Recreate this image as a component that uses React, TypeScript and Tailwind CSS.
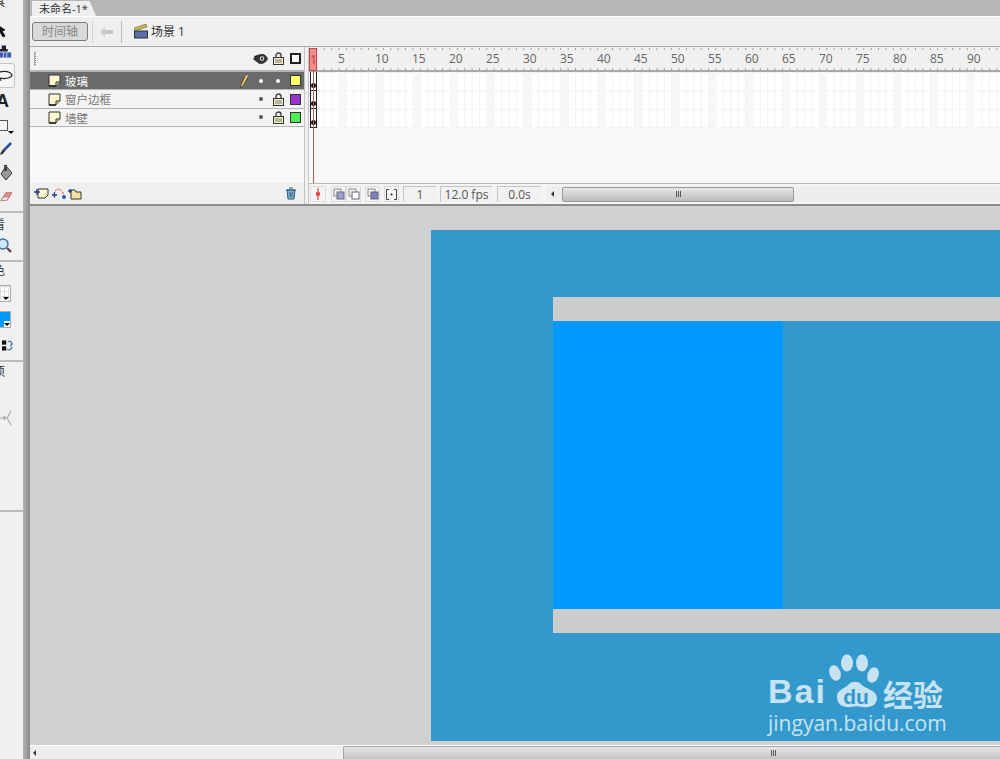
import React from 'react'

const cjk = "font-['Open_Sans','Noto_Sans_CJK_SC',sans-serif]"
const labels = [5, 10, 15, 20, 25, 30, 35, 40, 45, 50, 55, 60, 65, 70, 75, 80, 85, 90]

const PageIcon = () => (
  <svg width="13" height="13" viewBox="0 0 13 13">
    <path d="M1 1h11v7l-4 4H1z" fill="#fbf6cf" stroke="#333" strokeWidth="1" />
    <path d="M12 8H8v4" fill="#d8d0a0" stroke="#333" strokeWidth="1" />
    <path d="M1 12h7" stroke="#222" strokeWidth="1.5" />
  </svg>
)

const Lock = () => (
  <svg width="11" height="13" viewBox="0 0 11 13">
    <path d="M3 6V3.500a2.500 2.500 0 0 1 5 0V6" fill="none" stroke="#444" strokeWidth="1.4" />
    <rect x="0.5" y="5.5" width="10" height="7" fill="#f6f0c8" stroke="#333" />
    <path d="M2 8h7M2 10h7" stroke="#777" strokeWidth="1" />
  </svg>
)

const Eye = () => (
  <svg width="15" height="10" viewBox="0 0 15 10">
    <path d="M0 5C3 1 6 0 9 0c3 0 5 2 6 5-1 2-4 5-7 5C5 10 3 7 0 5z" fill="#333" />
    <path d="M1 2 6 1 2 4z" fill="#222" />
    <circle cx="9" cy="4.500" r="2.200" fill="#eee" />
    <circle cx="9" cy="4.500" r="1.200" fill="#222" />
  </svg>
)

const Pencil = () => (
  <svg width="9" height="14" viewBox="0 0 9 14">
    <path d="M6 .5 8.500 2 3 12 .5 13.500 1 10.500z" fill="#f2cf66" stroke="#333" strokeWidth=".8" />
    <path d="M6 .5 8.500 2 7.600 3.600 5.100 2.200z" fill="#e9a0a0" />
  </svg>
)

const Dot = ({ light }: { light?: boolean }) => (
  <span className={`block w-[4px] h-[4px] rounded-full ${light ? 'bg-white' : 'bg-[#555]'}`} />
)

const LayerRow = ({ name, color, active }: { name: string; color: string; active?: boolean }) => (
  <div className={`h-[18.4px] flex items-center pl-[18px] pr-[3px] border-b border-[#b4b4b4] ${active ? 'bg-[#6a6a6a]' : 'bg-[#f3f3f3]'}`}>
    <PageIcon />
    <span className={`ml-[4px] pt-[2px] text-[11.5px] leading-none ${cjk} ${active ? 'text-white' : 'text-[#777]'}`}>{name}</span>
    <div className="ml-auto flex items-center">
      <div className="w-[16px] flex justify-center">{active && <Pencil />}</div>
      <div className="w-[17px] flex justify-center"><Dot light={active} /></div>
      <div className="w-[18px] flex justify-center">{active ? <Dot light /> : <Lock />}</div>
      <div className="w-[3px]" />
      <span className={`block w-[11px] h-[11px] border border-[#333] ${color}`} />
    </div>
  </div>
)

const OnionIcon = ({ fill }: { fill: string }) => (
  <svg width="12" height="12" viewBox="0 0 12 12">
    <rect x="1" y="1" width="7" height="7" fill="none" stroke="#888" />
    <rect x="4" y="4" width="7" height="7" fill={fill} stroke="#667" />
  </svg>
)

const BarButton = ({ children, className = 'w-[15px]' }: { children: React.ReactNode; className?: string }) => (
  <div className={`h-[16px] flex items-center justify-center bg-[#f4f4f4] border border-[#dcdcdc] ${className}`}>{children}</div>
)

const Field = ({ children, className = '' }: { children: React.ReactNode; className?: string }) => (
  <div className={`h-[16px] flex items-center justify-center bg-[#f1f1f1] border-t border-l border-[#c4c4c4] text-[12px] text-[#555] font-['Open_Sans',sans-serif] ${className}`}>{children}</div>
)

const Grip = () => (
  <span className="flex gap-[1px]">
    <span className="w-[1px] h-[6px] bg-[#555]" />
    <span className="w-[1px] h-[6px] bg-[#555]" />
    <span className="w-[1px] h-[6px] bg-[#555]" />
  </span>
)

const ToolRule = ({ className = '' }: { className?: string }) => <div className={`h-[2px] w-full bg-[#bdbdbd] ${className}`} />

const ToolLabel = ({ text, className = '' }: { text: string; className?: string }) => (
  <div className={`-ml-[7px] text-[12px] leading-none text-[#333] ${cjk} ${className}`}>{text}</div>
)

const Toolbar = () => (
  <aside className="w-[23px] shrink-0 h-full bg-[#f0f0f0] overflow-hidden flex flex-col">
    <ToolLabel text="具" className="-mt-[4px] h-[22px]" />
    <div className="h-[23px] flex items-center">
      <svg className="-ml-[4px]" width="12" height="16" viewBox="0 0 12 16"><path d="M0 2l9 6-3 1 3 5-2 1-3-5-4 3z" fill="#111" stroke="#222" /></svg>
    </div>
    <div className="h-[22px] flex items-center">
      <svg width="12" height="14" viewBox="0 0 14 15"><path d="M2 0v4H0v3h9V4H7V0z" fill="#223" /><rect x="0" y="8" width="13" height="6" fill="#3b5bb5" /><path d="M4 8v6M8 8v6" stroke="#dde" /></svg>
    </div>
    <div className="h-[25px] w-[15px] flex items-center border border-l-0 border-[#c6c6c6] rounded-r-[3px] bg-[#f6f6f6]">
      <svg width="14" height="12" viewBox="0 0 14 12"><ellipse cx="4" cy="5" rx="8" ry="3.600" fill="none" stroke="#222" strokeWidth="1.2" /><path d="M0 8 1 11" stroke="#222" /></svg>
    </div>
    <div className="h-[25px] flex items-center">
      <span className="-ml-[4px] text-[18px] font-bold leading-none text-[#222] font-['Liberation_Sans',sans-serif]">A</span>
    </div>
    <div className="h-[24px] flex items-center relative">
      <span className="block -ml-[2px] w-[10px] h-[11px] bg-[#f6f6f6] border border-[#555]" />
      <span className="absolute left-[8px] top-[18px] border-x-[3px] border-t-[3px] border-x-transparent border-t-black" />
    </div>
    <div className="h-[24px] flex items-center">
      <svg width="12" height="14" viewBox="0 0 13 15"><path d="M11 0 13 2 6 9 4 7z" fill="#2a4fa8" /><path d="M4 7 6 9 3 13 0 14 1 11z" fill="#334" /></svg>
    </div>
    <div className="h-[24px] flex items-center">
      <svg width="12" height="16" viewBox="0 0 12 16"><path d="M6 1l6 7-6 7-5-6z" fill="#999" stroke="#333" /><rect x="4" y="0" width="3" height="6" fill="#444" /></svg>
    </div>
    <div className="h-[24px] flex items-center">
      <svg width="12" height="12" viewBox="0 0 14 12"><path d="M7 1 14 1 8 10H1z" fill="#e88a92" stroke="#a66" /><path d="M1 10 4 6h6l-2 4z" fill="#eee" stroke="#a66" strokeWidth=".6" /></svg>
    </div>
    <ToolRule className="mt-[2px]" />
    <ToolLabel text="看" className="mt-[6px] h-[15px]" />
    <div className="h-[24px] flex items-center">
      <svg width="12" height="16" viewBox="0 0 12 16"><circle cx="3" cy="6" r="5" fill="#cfe6f7" stroke="#3a6f9e" strokeWidth="1.4" /><path d="M7 10l4 4" stroke="#704040" strokeWidth="2.400" /></svg>
    </div>
    <ToolRule className="mt-[2px]" />
    <ToolLabel text="色" className="mt-[3px] h-[15px]" />
    <div className="h-[26px] flex items-center">
      <div className="w-[11px] h-[17px] border border-l-0 border-[#aaa] bg-[linear-gradient(90deg,#ddd_1px,transparent_1px),linear-gradient(#ddd_1px,#fff_1px)] bg-[length:4px_5px] relative">
        <span className="absolute right-[1px] bottom-[1px] border-x-[3px] border-t-[3px] border-x-transparent border-t-black" />
      </div>
    </div>
    <div className="h-[26px] flex items-center">
      <div className="w-[11px] h-[17px] border border-l-0 border-[#aaa] bg-[#0099ff] relative">
        <span className="absolute right-0 bottom-0 w-[6px] h-[6px] bg-white" />
        <span className="absolute right-[0px] bottom-[1px] border-x-[3px] border-t-[3px] border-x-transparent border-t-black" />
      </div>
    </div>
    <div className="h-[26px] flex items-center">
      <svg className="ml-[2px]" width="11" height="11" viewBox="0 0 13 12"><rect x="0" y="0" width="5" height="5" fill="#111" /><rect x="0" y="7" width="5" height="5" fill="#111" /><path d="M7 1h3l2 3-2 3M6 11h4l2-3" fill="none" stroke="#2a6fb0" strokeWidth="1.4" /></svg>
    </div>
    <ToolRule className="mt-[2px]" />
    <ToolLabel text="项" className="mt-[4px] h-[15px]" />
    <div className="h-[29px]" />
    <div className="h-[16px] flex items-center">
      <svg width="12" height="16" viewBox="0 0 12 16"><path d="M0 8h4M4 6l2 2-2 2z" stroke="#aaa" fill="#aaa" /><path d="M11 1 7 8l4 7" fill="none" stroke="#aaa" strokeWidth="1.2" /></svg>
    </div>
    <div className="h-[84px]" />
    <ToolRule className="h-[1px]" />
  </aside>
)

const Breadcrumb = () => (
  <div className="h-[31px] bg-[#efefef] border-t border-white flex items-center pl-[2px] border-b border-b-[#a8a8a8]">
    <div className={`w-[56px] h-[19px] rounded-[3px] border border-[#7c7c7c] bg-[#d9d9d9] text-[12px] leading-none text-[#888] flex items-center justify-center ${cjk}`}>时间轴</div>
    <span className="ml-[4px] w-[1px] h-[22px] bg-[#cfcfcf]" />
    <svg className="ml-[7px]" width="13" height="10" viewBox="0 0 13 10"><path d="M0 5 5 0v3h8v4H5v3z" fill="#c8c8c8" /></svg>
    <span className="ml-[8px] w-[1px] h-[22px] bg-[#bdbdbd]" />
    <svg className="ml-[12px]" width="15" height="15" viewBox="0 0 15 15">
      <path d="M0 4 12 0l1 3L1 7z" fill="#c9b24a" stroke="#665" strokeWidth=".6" />
      <rect x="0.5" y="7" width="13" height="7" fill="#5b6ea8" stroke="#334" />
    </svg>
    <span className={`ml-[2px] text-[12px] leading-none text-[#333] ${cjk}`}>场景 1</span>
  </div>
)

const LayerPanel = () => (
  <div className="w-[274px] shrink-0 flex flex-col bg-[#f8f8f8]">
    <div className="h-[25px] flex items-center pl-[4px] pr-[3px] bg-[#f1f1f1] border-b-2 border-[#b4b4b4]">
      <span className="w-[2px] h-[14px] bg-[linear-gradient(#888_1px,transparent_1px)] bg-[length:2px_2px] border-l border-[#aaa]" />
      <div className="ml-auto flex items-center">
        <div className="w-[17px] flex justify-center"><Eye /></div>
        <div className="w-[18px] flex justify-center"><Lock /></div>
        <div className="w-[3px]" />
        <span className="block w-[11px] h-[11px] bg-white border-2 border-[#222]" />
      </div>
    </div>
    <LayerRow name="玻璃" color="bg-[#ffff66]" active />
    <LayerRow name="窗户边框" color="bg-[#9933cc]" />
    <LayerRow name="墙壁" color="bg-[#4dee55]" />
    <div className="flex-1" />
    <div className="h-[21px] bg-[#efefef] flex items-center pl-[4px] pr-[7px]">
      <svg width="15" height="13" viewBox="0 0 15 13"><path d="M4 2h10v6l-3 3H4z" fill="#fbf6cf" stroke="#333" /><path d="M0 5h6M3 2v6" stroke="#2b3f8f" strokeWidth="1.6" /></svg>
      <svg className="ml-[3px]" width="14" height="13" viewBox="0 0 14 13"><path d="M2 7C3 1 9 0 12 8" fill="none" stroke="#c33" strokeDasharray="2 1" /><path d="M0 8h5M2.500 5.500v5" stroke="#2b3f8f" strokeWidth="1.4" /><circle cx="12" cy="10" r="2" fill="#2b5fa8" /></svg>
      <svg className="ml-[2px]" width="14" height="12" viewBox="0 0 14 12"><path d="M3 2h4l1 2h5v7H3z" fill="#f2e4a0" stroke="#333" /><path d="M0 3h4M2 1v4" stroke="#2b3f8f" strokeWidth="1.4" /></svg>
      <svg className="ml-auto" width="12" height="13" viewBox="0 0 12 13"><path d="M1 3h10M4 1h4M2 3l1 9h6l1-9z" fill="#7fb0cf" stroke="#2f5f80" /><path d="M5 5v5M7 5v5" stroke="#2f5f80" /></svg>
    </div>
  </div>
)

const FramePane = () => (
  <div className="flex-1 relative flex flex-col bg-[#f8f8f8] overflow-hidden">
    <div className="h-[25px] bg-[#f0f0f0] border-b-2 border-[#a8a8a8] relative flex items-center pl-[29px]">
      <div className="absolute left-0 right-0 top-[1px] h-[2px] bg-[linear-gradient(90deg,#999_1px,transparent_1px)] bg-[length:7.4px_2px]" />
      <div className="absolute left-0 right-0 bottom-[0px] h-[2px] bg-[linear-gradient(90deg,#999_1px,transparent_1px)] bg-[length:7.4px_2px]" />
      {labels.map((n) => (
        <span key={n} className="w-[37px] shrink-0 text-[12px] leading-none text-[#666] font-['Open_Sans',sans-serif]">{n}</span>
      ))}
    </div>
    <div className="h-[56px] bg-white bg-[linear-gradient(90deg,#f7f7f7_7.4px,transparent_7.4px),linear-gradient(90deg,#f2f2f2_1px,transparent_1px),linear-gradient(#f2f2f2_1px,transparent_1px)] bg-[length:37px_100%,7.4px_100%,100%_18.4px] [background-position:30px_0,0_0,0_0]" />
    <div className="flex-1" />
    <div className="h-[21px] border-t border-[#b8b8b8] bg-[#f4f4f4] flex items-center pl-[1px]">
      <BarButton className="w-[16px]">
        <svg width="6" height="12" viewBox="0 0 6 12"><path d="M3 0v12" stroke="#b33" /><circle cx="3" cy="6" r="2.200" fill="#e44" /></svg>
      </BarButton>
      <BarButton className="w-[15px] ml-[5px]"><OnionIcon fill="#9c9cd8" /></BarButton>
      <BarButton><OnionIcon fill="#fff" /></BarButton>
      <BarButton className="w-[15px] ml-[4px]"><OnionIcon fill="#7d7dc0" /></BarButton>
      <BarButton className="w-[15px] ml-[4px]">
        <svg width="11" height="11" viewBox="0 0 11 11"><path d="M3 .5H.5v10H3M8 .5h2.500v10H8" fill="none" stroke="#445" /><circle cx="5.500" cy="5.500" r="1" fill="#222" /></svg>
      </BarButton>
      <Field className="ml-[4px] w-[33px]">1</Field>
      <Field className="ml-[4px] w-[52px]">12.0 fps</Field>
      <Field className="ml-[5px] w-[44px]">0.0s</Field>
      <div className="ml-[5px] flex-1 h-[16px] flex items-center bg-[#eeeeee] pl-[5px]">
        <span className="border-y-[3px] border-r-[3px] border-y-transparent border-r-[#333]" />
        <div className="ml-[8px] w-[232px] h-[15px] rounded-[2px] border border-[#9a9a9a] bg-[linear-gradient(#e8e8e8,#bcbcbc)] flex items-center justify-center">
          <Grip />
        </div>
      </div>
    </div>
    {/* playhead and the key frames sit on top of the ruler and grid */}
    <div className="absolute left-0 top-[1px] w-[8px] h-[23px] bg-[#fb8a8a] border border-[#b84a4a] text-[12px] leading-[21px] text-center text-[#a04848] font-['Open_Sans',sans-serif]">1</div>
    <div className="absolute left-[1px] top-[25px] w-[7px] h-[56px] flex flex-col">
      {[0, 1, 2].map((i) => (
        <div key={i} className="flex-1 border border-t-0 border-[#222] flex items-end justify-center pb-[2px]">
          <span className="block w-[5px] h-[5px] rounded-full bg-[#2a0a10]" />
        </div>
      ))}
    </div>
    <div className="absolute left-[4px] top-[24px] w-[1px] h-[112px] bg-[#b0585e]" />
  </div>
)

const Watermark = () => (
  <div className="absolute left-[738px] top-[443px] w-[190px] h-[95px] text-[#c7e2f1]">
    <svg className="absolute left-[60px] top-0" width="58" height="62" viewBox="0 0 58 62">
      <ellipse cx="7" cy="24" rx="5.500" ry="8" transform="rotate(-20 7 24)" fill="#c7e2f1" />
      <ellipse cx="19" cy="14" rx="6" ry="8.500" fill="#c7e2f1" />
      <ellipse cx="34" cy="14" rx="6" ry="8.500" fill="#c7e2f1" />
      <ellipse cx="45" cy="26" rx="5.500" ry="8" transform="rotate(20 45 26)" fill="#c7e2f1" />
      <path d="M9 48c0-8 8-8 12-13 3-3 9-3 12 0 4 5 16 6 16 14 0 8-8 10-14 9-5-1-8-1-12 0-7 1-14-2-14-10z" fill="#c7e2f1" />
      <text x="28" y="55" textAnchor="middle" fontSize="21" fontWeight="700" fontFamily="'Liberation Sans', sans-serif" fill="#3399cc">du</text>
    </svg>
    <span className="absolute left-0 top-[25px] text-[34px] font-bold leading-none tracking-[2px] font-['Liberation_Sans',sans-serif]">Bai</span>
    <span className="absolute left-[115px] top-[29px] text-[30px] leading-none font-bold font-['Noto_Sans_CJK_SC',sans-serif]">经验</span>
    <span className="absolute left-0 top-[64px] text-[21px] leading-none whitespace-nowrap font-['Open_Sans',sans-serif]">jingyan.baidu.com</span>
  </div>
)

const Stage = () => (
  <div className="flex-1 bg-[#d0d0d0] pl-[401px] pt-[24px] relative overflow-hidden">
    <div className="h-[511px] bg-[#3399cc] pt-[67px] pl-[122px]">
      <div className="h-[24px] bg-[#cccccc]" />
      <div className="h-[288px] w-[230px] bg-[#0099ff]" />
      <div className="h-[24px] bg-[#cccccc]" />
    </div>
    <Watermark />
  </div>
)

export default function App() {
  return (
    <div className="w-[1000px] h-[759px] flex overflow-hidden bg-[#d0d0d0]">
      <Toolbar />
      <div className="w-[7px] shrink-0 bg-[linear-gradient(90deg,#b4b4b4,#8a8a8a)]" />
      <div className="flex-1 min-w-0 flex flex-col">
        <div className="h-[16px] bg-[#b6b6b6] flex items-end pl-[2px]">
          <div className={`w-[64px] h-[15px] pl-[7px] bg-[#efefef] [clip-path:polygon(0_0,90%_0,100%_100%,0_100%)] text-[11px] leading-[16px] text-[#333] ${cjk}`}>未命名-1*</div>
        </div>
        <Breadcrumb />
        <div className="h-[159px] flex border-b-2 border-[#8c8c8c]">
          <LayerPanel />
          <div className="w-[5px] shrink-0 bg-[#f0f0f0] border-x border-[#c4c4c4]" />
          <FramePane />
        </div>
        <Stage />
        <div className="h-[14px] bg-[#eeeeee] border-t border-white flex items-center overflow-hidden">
          <span className="ml-[3px] border-y-[3px] border-r-[3px] border-y-transparent border-r-[#333]" />
          <div className="ml-[307px] w-[860px] shrink-0 h-full border-l border-t border-[#a4a4a4] bg-[linear-gradient(#e6e6e6,#c4c4c4)] flex items-center justify-center rounded-tl-[2px]">
            <Grip />
          </div>
        </div>
      </div>
    </div>
  )
}
